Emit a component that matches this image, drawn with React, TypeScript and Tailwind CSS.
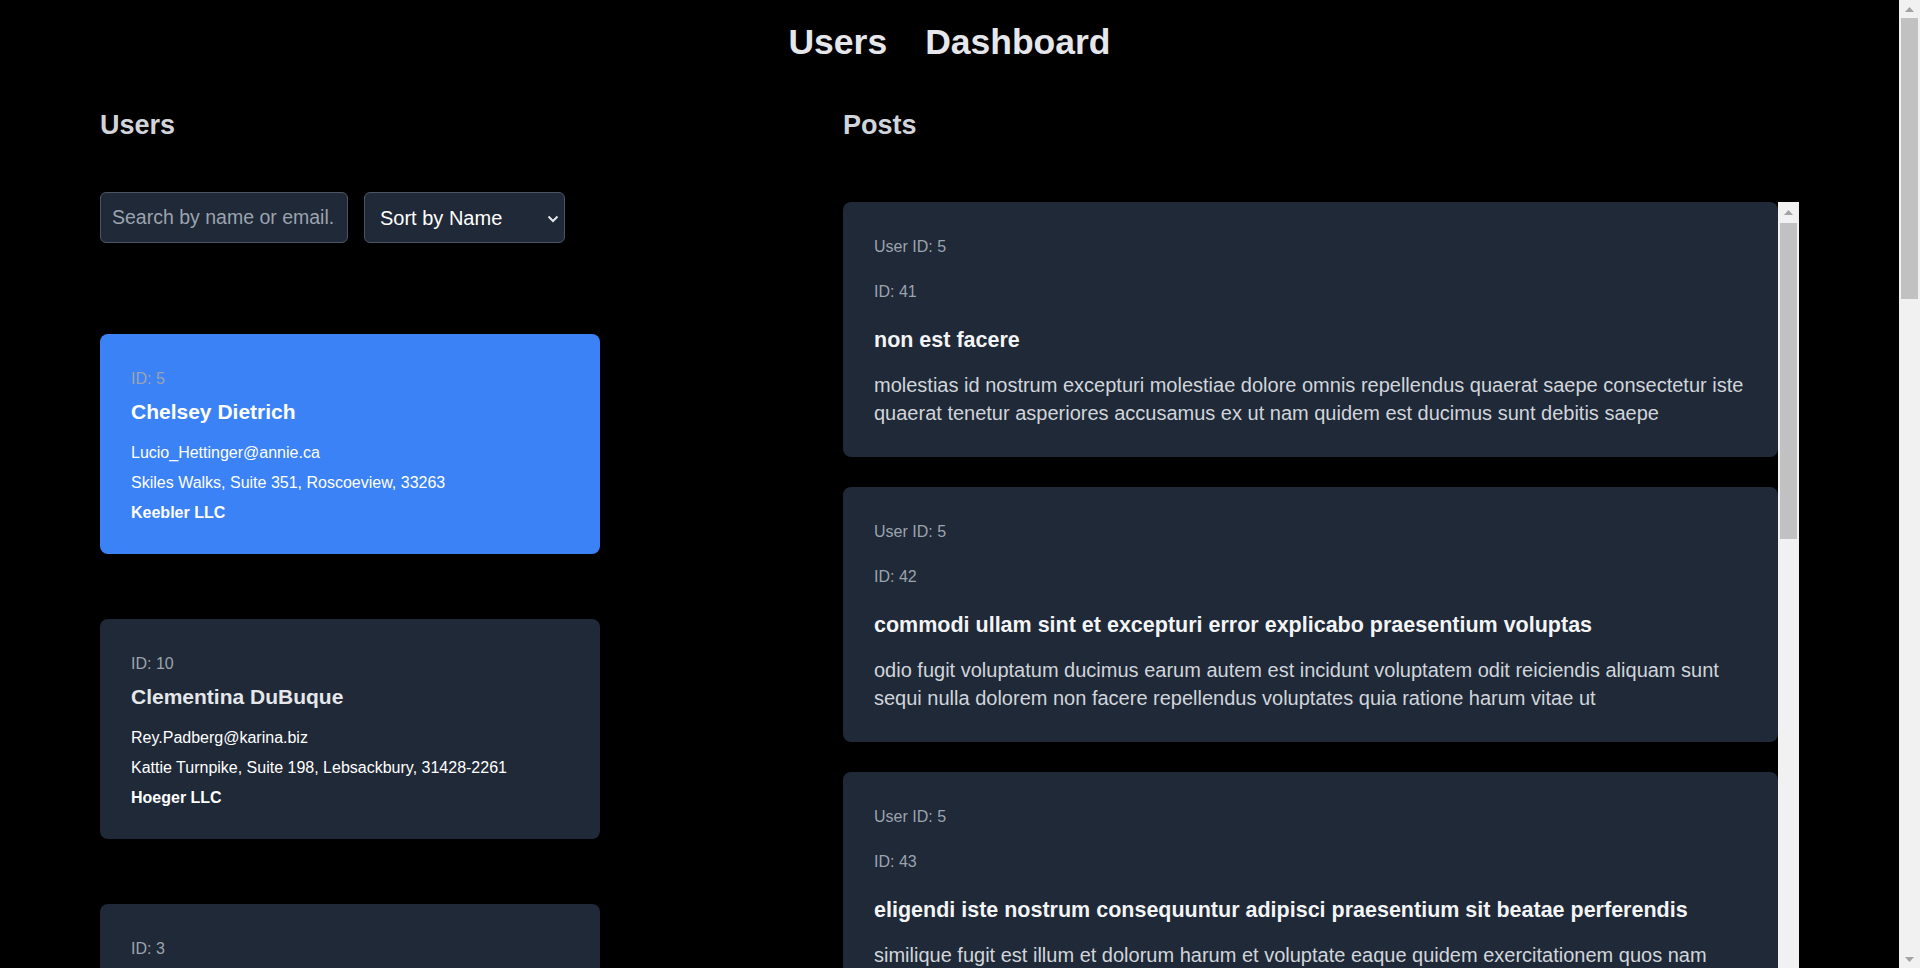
import React from "react";

type User = {
  id: number;
  name: string;
  email: string;
  address: string;
  company: string;
};

type Post = { id: number; userId: number; title: string; body: string };

const users: User[] = [
  { id: 5, name: "Chelsey Dietrich", email: "Lucio_Hettinger@annie.ca", address: "Skiles Walks, Suite 351, Roscoeview, 33263", company: "Keebler LLC" },
  { id: 10, name: "Clementina DuBuque", email: "Rey.Padberg@karina.biz", address: "Kattie Turnpike, Suite 198, Lebsackbury, 31428-2261", company: "Hoeger LLC" },
  { id: 3, name: "Clementine Bauch", email: "Nathan@yesenia.net", address: "Douglas Extension, Suite 847, McKenziehaven, 59590-4157", company: "Romaguera-Jacobson" },
  { id: 2, name: "Ervin Howell", email: "Shanna@melissa.tv", address: "Victor Plains, Suite 879, Wisokyburgh, 90566-7771", company: "Deckow-Crist" },
  { id: 9, name: "Glenna Reichert", email: "Chaim_McDermott@dana.io", address: "Dayna Park, Suite 449, Bartholomebury, 76495-3109", company: "Yost and Sons" },
  { id: 7, name: "Kurtis Weissnat", email: "Telly.Hoeger@billy.biz", address: "Rex Trail, Suite 280, Howemouth, 58804-1099", company: "Johns Group" },
  { id: 1, name: "Leanne Graham", email: "Sincere@april.biz", address: "Kulas Light, Apt. 556, Gwenborough, 92998-3874", company: "Romaguera-Crona" },
  { id: 6, name: "Mrs. Dennis Schulist", email: "Karley_Dach@jasper.info", address: "Norberto Crossing, Apt. 950, South Christy, 23505-1337", company: "Considine-Lockman" },
  { id: 8, name: "Nicholas Runolfsdottir V", email: "Sherwood@rosamond.me", address: "Ellsworth Summit, Suite 729, Aliyaview, 45169", company: "Abernathy Group" },
  { id: 4, name: "Patricia Lebsack", email: "Julianne.OConner@kory.org", address: "Hoeger Mall, Apt. 692, South Elvis, 53919-4257", company: "Robel-Corkery" },
];

const posts: Post[] = [
  { id: 41, userId: 5, title: "non est facere", body: "molestias id nostrum excepturi molestiae dolore omnis repellendus quaerat saepe consectetur iste quaerat tenetur asperiores accusamus ex ut nam quidem est ducimus sunt debitis saepe" },
  { id: 42, userId: 5, title: "commodi ullam sint et excepturi error explicabo praesentium voluptas", body: "odio fugit voluptatum ducimus earum autem est incidunt voluptatem odit reiciendis aliquam sunt sequi nulla dolorem non facere repellendus voluptates quia ratione harum vitae ut" },
  { id: 43, userId: 5, title: "eligendi iste nostrum consequuntur adipisci praesentium sit beatae perferendis", body: "similique fugit est illum et dolorum harum et voluptate eaque quidem exercitationem quos nam commodi possimus cum odio nihil nulla dolorum exercitationem magnam ex et a et distinctio debitis" },
  { id: 44, userId: 5, title: "optio dolor molestias sit", body: "temporibus est consectetur dolore et libero debitis vel velit laboriosam quia ipsum quibusdam qui itaque fuga rem aut ea et iure quam sed maxime ut distinctio quae" },
  { id: 45, userId: 5, title: "ut numquam possimus omnis eius suscipit laudantium iure", body: "est natus reiciendis nihil possimus aut provident ex et dolor repellat pariatur est nobis rerum repellendus dolorem autem" },
  { id: 46, userId: 5, title: "aut quo modi neque nostrum ducimus", body: "voluptatem quisquam iste voluptatibus natus officiis facilis dolorem quis quas ipsam vel et voluptatum in aliquid" },
  { id: 47, userId: 5, title: "quibusdam cumque rem aut deserunt", body: "voluptatem assumenda ut qui ut cupiditate aut impedit veniam occaecati nemo illum voluptatem laudantium molestiae beatae rerum ea iure soluta nostrum eligendi et voluptate" },
  { id: 48, userId: 5, title: "ut voluptatem illum ea doloribus itaque eos", body: "voluptates quo voluptatem facilis iure occaecati vel assumenda rerum officia et illum perspiciatis ab deleniti laudantium repellat ad ut et autem reprehenderit" },
  { id: 49, userId: 5, title: "laborum non sunt aut ut assumenda perspiciatis voluptas", body: "inventore ab sint natus fugit id nulla sequi architecto nihil quaerat eos tenetur in in eum veritatis non quibusdam officiis aspernatur cumque aut commodi aut" },
  { id: 50, userId: 5, title: "repellendus qui recusandae incidunt voluptates tenetur qui omnis exercitationem", body: "error suscipit maxime adipisci consequuntur recusandae voluptas eligendi et est et voluptates quia distinctio ab amet quaerat molestiae et vitae adipisci impedit sequi nesciunt quis consectetur" },
];

function ArrowUp() {
  return (
    <svg width="9" height="5" viewBox="0 0 9 5">
      <polygon points="4.5,0 9,5 0,5" fill="#a3a3a3" />
    </svg>
  );
}

function ArrowDown() {
  return (
    <svg width="9" height="5" viewBox="0 0 9 5">
      <polygon points="0,0 9,0 4.5,5" fill="#a3a3a3" />
    </svg>
  );
}

function UserCard({ user, selected }: { user: User; selected: boolean }) {
  return (
    <div
      className={
        "w-[500px] rounded-lg px-[31px] pt-[33px] pb-[29px] " +
        (selected ? "bg-[#3b82f6]" : "bg-[#1f2937]")
      }
    >
      <p className="text-base leading-6 text-[#9ca3af]">ID: {user.id}</p>
      <h3 className={"mt-[7px] text-[21px] leading-7 font-bold " + (selected ? "text-white" : "text-[#e5e7eb]")}>
        {user.name}
      </h3>
      <p className="mt-[15px] text-base leading-6 text-white">{user.email}</p>
      <p className="mt-[6px] text-base leading-6 text-white">{user.address}</p>
      <p className="mt-[6px] text-base leading-6 font-bold text-white">{user.company}</p>
    </div>
  );
}

function PostCard({ post }: { post: Post }) {
  return (
    <div className="rounded-lg bg-[#1f2937] px-[31px] pt-[33px] pb-[30px]">
      <p className="text-base leading-6 text-[#9ca3af]">User ID: {post.userId}</p>
      <p className="mt-[21px] text-base leading-6 text-[#9ca3af]">ID: {post.id}</p>
      <h3 className="mt-[20px] text-[21.5px] leading-8 font-bold text-[#f3f4f6]">{post.title}</h3>
      <p className="mt-[15px] text-xl leading-7 text-[#d1d5db]">{post.body}</p>
    </div>
  );
}

export default function App() {
  return (
    <div className="flex h-screen overflow-hidden bg-black font-['Liberation_Sans',Arial,sans-serif]">
      <div className="h-screen min-w-0 flex-1 overflow-hidden">
        <nav className="flex justify-center gap-[38px] pt-[21px] text-[35.5px] leading-[42px] font-bold text-[#e5e7eb]">
          <span>Users</span>
          <span>Dashboard</span>
        </nav>
        <main className="mt-[44px] flex px-[100px]">
          <section className="w-[743px] shrink-0">
            <h2 className="text-[27px] leading-9 font-bold text-[#d1d5db]">Users</h2>
            <div className="mt-[49px] flex gap-4">
              <input
                type="text"
                placeholder="Search by name or email..."
                className="h-[51px] w-[248px] rounded-md border border-[#4b5563] bg-[#1f2937] px-[11px] text-[19.5px] text-white placeholder:text-[#9ca3af] outline-none"
              />
              <div className="relative h-[51px] w-[201px]">
                <select className="h-full w-full appearance-none rounded-md border border-[#4b5563] bg-[#1f2937] pl-[15px] text-xl text-white outline-none">
                  <option>Sort by Name</option>
                  <option>Sort by ID</option>
                </select>
                <svg
                  className="pointer-events-none absolute right-[6px] top-[23px]"
                  width="12"
                  height="8"
                  viewBox="0 0 12 8"
                  fill="none"
                >
                  <polyline points="1.5,1.5 6,6 10.5,1.5" stroke="#e5e7eb" strokeWidth="2" />
                </svg>
              </div>
            </div>
            <div className="mt-[91px] flex flex-col gap-[65px]">
              {users.map((u, i) => (
                <UserCard key={u.id} user={u} selected={i === 0} />
              ))}
            </div>
          </section>
          <section className="min-w-0 flex-1">
            <h2 className="text-[27px] leading-9 font-bold text-[#d1d5db]">Posts</h2>
            <div className="mt-[59px] flex h-[968px]">
              <div className="min-w-0 flex-1 overflow-hidden">
                <div className="flex flex-col gap-[30px]">
                  {posts.map((p) => (
                    <PostCard key={p.id} post={p} />
                  ))}
                </div>
              </div>
              <div className="flex w-[21px] shrink-0 flex-col bg-[#f1f1f1]">
                <div className="flex h-[21px] items-center justify-center">
                  <ArrowUp />
                </div>
                <div className="mx-[2px] h-[316px] bg-[#c1c1c1]" />
                <div className="flex-1" />
                <div className="flex h-[21px] items-center justify-center">
                  <ArrowDown />
                </div>
              </div>
            </div>
          </section>
        </main>
      </div>
      <div className="flex h-screen w-[21px] shrink-0 flex-col bg-[#f1f1f1]">
        <div className="flex h-[18px] items-center justify-center">
          <ArrowUp />
        </div>
        <div className="mx-[2px] h-[281px] bg-[#c1c1c1]" />
        <div className="flex-1" />
        <div className="flex h-[18px] items-center justify-center">
          <ArrowDown />
        </div>
      </div>
    </div>
  );
}
